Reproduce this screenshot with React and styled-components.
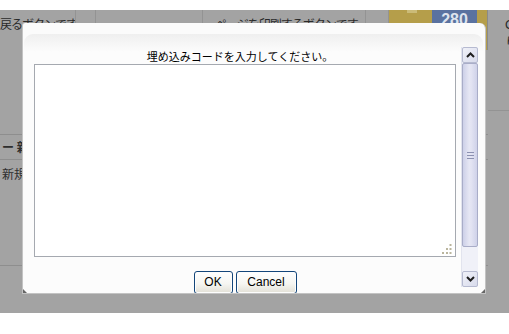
import React from "react";
import styled, { createGlobalStyle, css } from "styled-components";

const GlobalStyle = createGlobalStyle`
  html, body { margin: 0; padding: 0; background: #ffffff; }
  body { font-family: "Noto Sans CJK JP", "Liberation Sans", sans-serif; }
  * { box-sizing: border-box; }
`;

const Stage = styled.div`
  position: relative;
  margin-top: 10px;
  height: 303px;
  background: #a3a3a3;
  overflow: hidden;
`;

/* ---------- background page (dimmed) ---------- */
const Page = styled.div`
  display: flex;
  height: 100%;
  color: #2a2a2a;
  font-size: 12px;
`;

const Main = styled.div`
  width: 488px;
  flex: none;
  display: flex;
  flex-direction: column;
`;

const TopBar = styled.div`
  display: flex;
  height: 40px;
`;

const Cell = styled.div`
  width: ${(p) => p.$w}px;
  flex: none;
  border-right: 1px solid #939393;
  padding: 7px 0 0 ${(p) => p.$pad || 0}px;
  line-height: 14px;
  white-space: nowrap;
  overflow: hidden;
  letter-spacing: -1px;
  position: relative;
  ${(p) =>
    p.$yellow &&
    css`
      background: #b59e4a;
      border-right-color: #8a8a8a;
    `}
`;

const Bump = styled.div`
  position: absolute;
  left: 18px;
  top: 0;
  width: 10px;
  height: 3px;
  background: #cbbb78;
`;

const Badge = styled.div`
  position: absolute;
  left: 43px;
  top: 0;
  width: 45px;
  height: 24px;
  background: #5a72a0;
  color: #dde3ee;
  font-family: "Liberation Sans", sans-serif;
  font-weight: bold;
  font-size: 16px;
  letter-spacing: 0;
  text-align: center;
  line-height: 20px;
`;

const LeftSection = styled.div`
  margin-top: 84px;
  display: flex;
  flex-direction: column;
`;

const SectionRow = styled.div`
  border-top: 1px solid #8e8e8e;
  height: ${(p) => p.$h}px;
  padding: ${(p) => p.$pt}px 0 0 2px;
  line-height: 14px;
  white-space: nowrap;
  font-weight: ${(p) => (p.$bold ? "bold" : "normal")};
  color: #2e2e2e;
`;

const SidePane = styled.div`
  flex: 1;
  padding: 6px 0 0 17px;
  line-height: 18px;
  white-space: nowrap;
  font-family: "Liberation Sans", "Noto Sans CJK JP", sans-serif;
  font-size: 13px;
  color: #2a2a2a;
`;

const SideRule = styled.div`
  margin: 58px 0 0 -17px;
  border-top: 1px solid #939393;
`;

/* ---------- dialog ---------- */
const Dialog = styled.div`
  position: absolute;
  left: 22px;
  top: 13px;
  width: 464px;
  height: 271px;
  background: #fbfbfb;
  border: 1px solid #c3c3c3;
  border-top: none;
  border-radius: 3px 6px 0 0;
  padding-top: 11px;
  display: flex;
  flex-direction: column;
  overflow: hidden;
`;

const Corner = styled.div`
  position: absolute;
  width: 0;
  height: 0;
  border-style: solid;
  ${(p) =>
    p.$pos === "bl" &&
    css`
      left: 0;
      bottom: 0;
      border-width: 4px 0 0 4px;
      border-color: transparent transparent transparent #666;
    `}
  ${(p) =>
    p.$pos === "br" &&
    css`
      right: 0;
      bottom: 0;
      border-width: 0 0 4px 4px;
      border-color: transparent transparent #666 transparent;
    `}
`;

const Panel = styled.div`
  flex: 1;
  margin: 0 2px 0 1px;
  border-radius: 9px 9px 0 0;
  background: linear-gradient(#efefef, #fcfcfc 18px, #fcfcfc);
  display: flex;
`;

const Content = styled.div`
  flex: 1;
  min-width: 0;
  padding-left: 10px;
  display: flex;
  flex-direction: column;
`;

const Title = styled.div`
  margin-top: 14px;
  height: 16px;
  line-height: 16px;
  text-align: center;
  font-size: 11px;
  color: #000;
  white-space: nowrap;
  padding-right: 10px;
`;

const EditorBox = styled.div`
  position: relative;
  height: 193px;
`;

const CodeArea = styled.textarea`
  display: block;
  width: 100%;
  height: 100%;
  border: 1px solid #a5a9b0;
  background: #fff;
  resize: none;
  outline: none;
  margin: 0;
  padding: 2px;
  font-family: "Liberation Mono", monospace;
  font-size: 12px;
`;

const Grip = styled.svg`
  position: absolute;
  right: 4px;
  bottom: 3px;
  width: 10px;
  height: 10px;
`;

const ButtonRow = styled.div`
  margin-top: 14px;
  display: flex;
  justify-content: center;
  gap: 3px;
`;

const Btn = styled.button`
  width: ${(p) => p.$w}px;
  height: 23px;
  padding: 0 0 2px;
  border: 1px solid #14467a;
  border-radius: 3px;
  background: linear-gradient(#ffffff, #f6f6f2 55%, #e2e0d6);
  box-shadow: inset 0 0 0 1px #fdfdfd;
  font-family: "Liberation Sans", sans-serif;
  font-size: 12px;
  color: #000;
  line-height: 18px;
`;

const ScrollBar = styled.div`
  width: 17px;
  flex: none;
  margin: 13px 5px 0 5px;
  height: 240px;
  display: flex;
  flex-direction: column;
  background: #f0f1f8;
  border-left: 1px solid #e2e4ee;
`;

const ArrowBtn = styled.div`
  height: 16px;
  flex: none;
  border: 1px solid #b6bad0;
  border-radius: 2px;
  background: linear-gradient(135deg, #f0f1f8, #d8dbec);
  display: flex;
  align-items: center;
  justify-content: center;
`;

const Thumb = styled.div`
  height: 184px;
  flex: none;
  border: 1px solid #a9adc8;
  border-radius: 2px;
  background: linear-gradient(90deg, #cdd0e8, #e6e7f4 45%, #e2e3f2 60%, #cfd2e9);
  display: flex;
  align-items: center;
  justify-content: center;
`;

const Spacer = styled.div`
  flex: 1;
`;

const Chevron = ({ up }) => (
  <svg width="9" height="6" viewBox="0 0 9 6">
    <polyline
      points={up ? "1,5 4.5,1.5 8,5" : "1,1 4.5,4.5 8,1"}
      fill="none"
      stroke="#1e1e1e"
      strokeWidth="2"
    />
  </svg>
);

const GripLines = () => (
  <svg width="7" height="7" viewBox="0 0 7 7">
    <rect x="0" y="0" width="7" height="1" fill="#8c91b1" />
    <rect x="0" y="3" width="7" height="1" fill="#8c91b1" />
    <rect x="0" y="6" width="7" height="1" fill="#8c91b1" />
  </svg>
);

export default function App() {
  return (
    <>
      <GlobalStyle />
      <Stage>
        <Page>
          <Main>
            <TopBar>
              <Cell $w={76}>戻るボタンです</Cell>
              <Cell $w={20} />
              <Cell $w={107} />
              <Cell $w={163} $pad={12}>ページを印刷するボタンです</Cell>
              <Cell $w={23} />
              <Cell $w={99} $yellow>
                <Bump />
                <Badge>280</Badge>
              </Cell>
            </TopBar>
            <LeftSection>
              <SectionRow $h={25} $pt={5} $bold>
                ー 新規作成
              </SectionRow>
              <SectionRow $h={106} $pt={7}>
                新規登録：
              </SectionRow>
              <SectionRow $h={30} $pt={0} />
            </LeftSection>
          </Main>
          <SidePane>
            <div>O</div>
            <div>り</div>
            <SideRule />
          </SidePane>
        </Page>

        <Dialog>
          <Panel>
            <Content>
              <Title>埋め込みコードを入力してください。</Title>
              <EditorBox>
                <CodeArea aria-label="埋め込みコード" />
                <Grip viewBox="0 0 10 10">
                  <rect x="7.5" y="0" width="2" height="2" fill="#bab59e" />
                  <rect x="4" y="4" width="2" height="2" fill="#bab59e" />
                  <rect x="7.5" y="4" width="2" height="2" fill="#bab59e" />
                  <rect x="0" y="8" width="2" height="2" fill="#bab59e" />
                  <rect x="4" y="8" width="2" height="2" fill="#bab59e" />
                  <rect x="7.5" y="8" width="2" height="2" fill="#bab59e" />
                </Grip>
              </EditorBox>
              <ButtonRow>
                <Btn $w={39}>OK</Btn>
                <Btn $w={61}>Cancel</Btn>
              </ButtonRow>
            </Content>
            <ScrollBar>
              <ArrowBtn>
                <Chevron up />
              </ArrowBtn>
              <Thumb>
                <GripLines />
              </Thumb>
              <Spacer />
              <ArrowBtn>
                <Chevron />
              </ArrowBtn>
            </ScrollBar>
          </Panel>
          <Corner $pos="bl" />
          <Corner $pos="br" />
        </Dialog>
      </Stage>
    </>
  );
}
